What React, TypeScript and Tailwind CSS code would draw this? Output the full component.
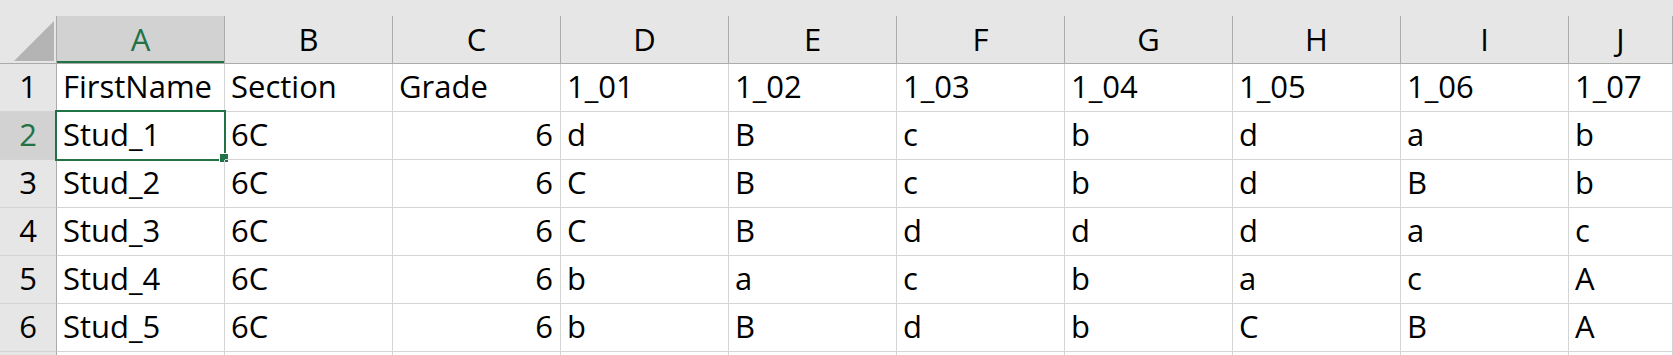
import React from "react";

const COLS = ["A", "B", "C", "D", "E", "F", "G", "H", "I", "J"];

const ROWS: string[][] = [
  ["FirstName", "Section", "Grade", "1_01", "1_02", "1_03", "1_04", "1_05", "1_06", "1_07"],
  ["Stud_1", "6C", "6", "d", "B", "c", "b", "d", "a", "b"],
  ["Stud_2", "6C", "6", "C", "B", "c", "b", "d", "B", "b"],
  ["Stud_3", "6C", "6", "C", "B", "d", "d", "d", "a", "c"],
  ["Stud_4", "6C", "6", "b", "a", "c", "b", "a", "c", "A"],
  ["Stud_5", "6C", "6", "b", "B", "d", "b", "C", "B", "A"],
  ["", "", "", "", "", "", "", "", "", ""],
];

const grid = "grid grid-cols-[57px_repeat(9,168px)_1fr]";

export default function App() {
  return (
    <div className="w-[1673px] h-[355px] overflow-hidden bg-white text-black font-['Open_Sans','Liberation_Sans',sans-serif] text-[31px] leading-none">
      {/* column headers */}
      <div className={`${grid} bg-[#e6e6e6] pt-4 border-b border-[#ababab]`}>
        <div className="h-[47px] border-r border-[#ababab] relative">
          <svg className="absolute left-[14px] top-[4px]" width="41" height="41" viewBox="0 0 41 41">
            <polygon points="0,41 40,1 40,41" fill="#b4b4b4" />
          </svg>
        </div>
        {COLS.map((c, i) => (
          <div
            key={c}
            className={
              i === 0
                ? "h-[47px] flex items-center justify-center bg-[#d2d2d2] text-[#217346] border-r border-[#ababab] shadow-[inset_0_-2px_0_#217346]"
                : "h-[47px] flex items-center justify-center border-r border-[#ababab]"
            }
          >
            {c}
          </div>
        ))}
      </div>

      {ROWS.map((row, r) => (
        <div key={r} className={grid}>
          <div
            className={
              r === 1
                ? "h-[48px] flex items-end justify-center pb-[9px] bg-[#d2d2d2] text-[#217346] border-r border-b border-r-[#ababab] border-b-[#d4d4d4]"
                : "h-[48px] flex items-end justify-center pb-[9px] bg-[#e6e6e6] border-r border-b border-r-[#ababab] border-b-[#d4d4d4]"
            }
          >
            {r < 6 ? r + 1 : ""}
          </div>
          {row.map((v, c) => (
            <div
              key={c}
              className={`relative h-[48px] flex items-end pb-[9px] border-r border-b border-[#d4d4d4] whitespace-nowrap ${
                r > 0 && c === 2 ? "justify-end pr-[7px]" : "pl-[6px]"
              }`}
            >
              {v}
              {r === 1 && c === 0 && (
                <>
                  <div className="absolute -left-[2px] -top-[2px] -right-[2px] -bottom-[2px] border-2 border-[#217346]" />
                  <div className="absolute -right-[5px] -bottom-[4px] w-[10px] h-[10px] bg-[#217346] border border-white" />
                </>
              )}
            </div>
          ))}
        </div>
      ))}
    </div>
  );
}
